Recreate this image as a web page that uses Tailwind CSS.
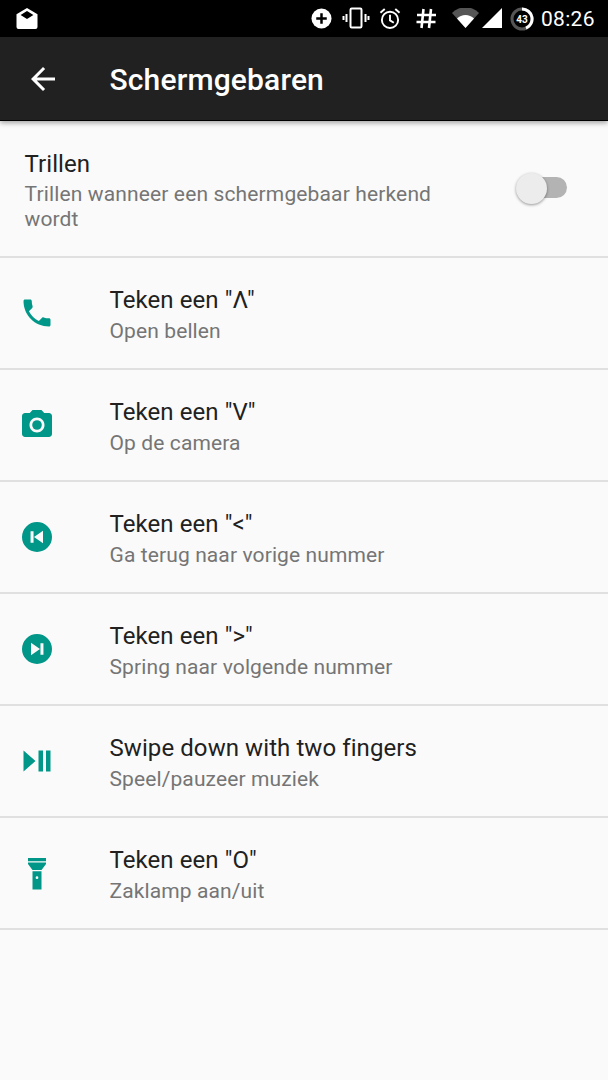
<!DOCTYPE html>
<html>
<head>
<script src="https://cdn.jsdelivr.net/npm/@tailwindcss/browser@4"></script>
</head>
<body class="m-0">
<div class="w-[608px] h-[1080px] bg-[#fafafa] overflow-hidden font-['Roboto',sans-serif] flex flex-col">
  <!-- status bar -->
  <div class="h-[37px] bg-black flex items-center justify-between text-white shrink-0">
    <svg class="ml-[15px] w-[24px] h-[24px]" viewBox="0 0 24 24" fill="#fff"><path d="M12 1 L22.5 7.2 V20 a2 2 0 0 1 -2 2 H3.5 a2 2 0 0 1 -2 -2 V7.2 Z M12 3.9 L5.6 7.9 L12 12 L18.4 7.9 Z" fill-rule="evenodd"/></svg>
    <div class="flex items-center h-full relative w-[300px]">
      <svg class="absolute left-[3px] top-[8px] w-[21px] h-[21px]" viewBox="0 0 22 22"><circle cx="11" cy="11" r="10.5" fill="#fff"/><path d="M5.5 9.7h4.2V5.5h2.6v4.2h4.2v2.6h-4.2v4.2H9.7v-4.2H5.5z" fill="#000"/></svg>
      <svg class="absolute left-[34px] top-[7px] w-[28px] h-[22px]" viewBox="0 0 28 22" fill="none" stroke="#fff"><rect x="8.5" y="1.5" width="11" height="19" rx="1.2" stroke-width="2"/><path d="M4.5 7v8M1.5 9v4M23.5 7v8M26.5 9v4" stroke-width="2"/></svg>
      <svg class="absolute left-[71px] top-[7px] w-[22px] h-[23px]" viewBox="0 0 23 24" fill="none" stroke="#fff" stroke-width="2"><circle cx="11.5" cy="13.5" r="8.5"/><path d="M11.5 8v6l4 2.5M1.5 6l4.5-4M21.5 6L17 2"/></svg>
      <svg class="absolute left-[108px] top-[8px] w-[21px] h-[21px]" viewBox="0 0 21 21" fill="none" stroke="#fff" stroke-width="2.6"><path d="M7.5 1L5.5 20M15 1L13 20M1 7h19M.5 14h19"/></svg>
      <svg class="absolute left-[144px] top-[8px] w-[27px] h-[20px]" viewBox="0 0 27 20"><path d="M0 5 A 19 19 0 0 1 27 5 L13.5 20 Z" fill="#555"/><path d="M5 10.5 A 12 12 0 0 1 22 10.5 L13.5 20 Z" fill="#fff"/></svg>
      <svg class="absolute left-[174px] top-[8px] w-[20px] h-[20px]" viewBox="0 0 21 21"><path d="M21 0V21H0Z" fill="#fff"/></svg>
      <svg class="absolute left-[202px] top-[7px] w-[24px] h-[24px]" viewBox="0 0 24 24" fill="none"><circle cx="12" cy="12" r="10" stroke="#555" stroke-width="3"/><path d="M12 2A10 10 0 0 1 16 21.2" stroke="#fff" stroke-width="3"/><text x="12" y="15.5" text-anchor="middle" font-size="10" font-weight="700" fill="#fff" font-family="Roboto">43</text></svg>
      <span class="absolute left-[233px] top-[5px] text-[21px] leading-[28px] tracking-[0.3px] text-white whitespace-nowrap">08:26</span>
    </div>
  </div>
  <!-- toolbar -->
  <div class="h-[84px] bg-[#212121] flex items-center shrink-0 border-b border-black shadow-[0_2px_5px_rgba(0,0,0,0.35)] relative">
    <svg class="ml-[24.5px] w-[36px] h-[36px]" viewBox="0 0 24 24" fill="#fff"><path d="M20 11H7.83l5.59-5.59L12 4l-8 8 8 8 1.41-1.41L7.83 13H20v-2z"/></svg>
    <span class="ml-[49px] pt-[2px] text-[30px] font-medium tracking-[0.15px] text-white leading-none">Schermgebaren</span>
  </div>
  <!-- Trillen -->
  <div class="h-[137px] shrink-0 border-b-2 border-[#e0e0e0] flex items-start pl-[24.5px] relative">
    <div class="pt-[29px] w-[430px]">
      <div class="text-[24px] leading-[28px] tracking-[0.08px] text-[#212121]">Trillen</div>
      <div class="text-[21px] leading-[25px] tracking-[0.14px] text-[#757575] mt-[4px]">Trillen wanneer een schermgebaar herkend wordt</div>
    </div>
    <div class="absolute left-[518px] top-[56px] w-[49px] h-[21px] rounded-full bg-[#b3b3b3]"></div>
    <div class="absolute left-[516px] top-[52px] w-[31px] h-[31px] rounded-full bg-[#ececec] shadow-[0_1px_3px_rgba(0,0,0,0.4)]"></div>
  </div>
  <!-- rows -->
  <div class="h-[112px] shrink-0 border-b-2 border-[#e0e0e0] flex items-center">
    <svg class="ml-[18.5px] w-[36px] h-[36px] text-[#009688]" viewBox="0 0 24 24" fill="currentColor"><path d="M6.62 10.79c1.44 2.83 3.76 5.14 6.59 6.59l2.2-2.2c.27-.27.67-.36 1.02-.24 1.12.37 2.33.57 3.57.57.55 0 1 .45 1 1V20c0 .55-.45 1-1 1-9.39 0-17-7.61-17-17 0-.55.45-1 1-1h3.5c.55 0 1 .45 1 1 0 1.25.2 2.45.57 3.57.11.35.03.74-.25 1.02l-2.2 2.2z"/></svg>
    <div class="ml-[55px] pt-[4px]">
      <div class="text-[24px] leading-[28px] tracking-[0.08px] text-[#212121]">Teken een "Λ"</div>
      <div class="text-[21px] leading-[25px] tracking-[0.11px] text-[#757575] mt-[5px]">Open bellen</div>
    </div>
  </div>
  <div class="h-[112px] shrink-0 border-b-2 border-[#e0e0e0] flex items-center">
    <svg class="ml-[18.5px] w-[36px] h-[36px] text-[#009688]" viewBox="0 0 24 24" fill="currentColor"><circle cx="12" cy="12" r="3.2"/><path d="M9 2L7.17 4H4c-1.1 0-2 .9-2 2v12c0 1.1.9 2 2 2h16c1.1 0 2-.9 2-2V6c0-1.1-.9-2-2-2h-3.17L15 2H9zm3 15c-2.76 0-5-2.24-5-5s2.24-5 5-5 5 2.24 5 5-2.24 5-5 5z"/></svg>
    <div class="ml-[55px] pt-[4px]">
      <div class="text-[24px] leading-[28px] tracking-[0.08px] text-[#212121]">Teken een "V"</div>
      <div class="text-[21px] leading-[25px] tracking-[0.11px] text-[#757575] mt-[5px]">Op de camera</div>
    </div>
  </div>
  <div class="h-[112px] shrink-0 border-b-2 border-[#e0e0e0] flex items-center">
    <svg class="ml-[18.5px] w-[36px] h-[36px] text-[#009688]" viewBox="0 0 24 24" fill="currentColor"><path fill-rule="evenodd" d="M12 2a10 10 0 1 0 0 20 10 10 0 0 0 0-20zM7.7 8.1h2v7.8h-2zM10 12l6-4.2v8.4z"/></svg>
    <div class="ml-[55px] pt-[4px]">
      <div class="text-[24px] leading-[28px] tracking-[0.08px] text-[#212121]">Teken een "&lt;"</div>
      <div class="text-[21px] leading-[25px] tracking-[0.11px] text-[#757575] mt-[5px]">Ga terug naar vorige nummer</div>
    </div>
  </div>
  <div class="h-[112px] shrink-0 border-b-2 border-[#e0e0e0] flex items-center">
    <svg class="ml-[18.5px] w-[36px] h-[36px] text-[#009688]" viewBox="0 0 24 24" fill="currentColor"><path fill-rule="evenodd" d="M12 2a10 10 0 1 0 0 20 10 10 0 0 0 0-20zM14.3 8.1h2v7.8h-2zM8 7.8l6 4.2-6 4.2z"/></svg>
    <div class="ml-[55px] pt-[4px]">
      <div class="text-[24px] leading-[28px] tracking-[0.08px] text-[#212121]">Teken een "&gt;"</div>
      <div class="text-[21px] leading-[25px] tracking-[0.11px] text-[#757575] mt-[5px]">Spring naar volgende nummer</div>
    </div>
  </div>
  <div class="h-[112px] shrink-0 border-b-2 border-[#e0e0e0] flex items-center">
    <svg class="ml-[18.5px] w-[36px] h-[36px] text-[#009688]" viewBox="0 0 24 24" fill="currentColor"><path d="M3 5v14l8-7zM13 5h3v14h-3zM18 5h3v14h-3z"/></svg>
    <div class="ml-[55px] pt-[4px]">
      <div class="text-[24px] leading-[28px] tracking-[0.08px] text-[#212121]">Swipe down with two fingers</div>
      <div class="text-[21px] leading-[25px] tracking-[0.11px] text-[#757575] mt-[5px]">Speel/pauzeer muziek</div>
    </div>
  </div>
  <div class="h-[112px] shrink-0 border-b-2 border-[#e0e0e0] flex items-center">
    <svg class="ml-[18.5px] w-[36px] h-[36px] text-[#009688]" viewBox="0 0 24 24" fill="currentColor"><path fill-rule="evenodd" d="M6 2h12v2.2H6zM6 5h12v1l-3 4H9L6 6zM9 10.8h6V23H9zM12 14.2a.9.9 0 1 0 0 1.8.9.9 0 0 0 0-1.8z"/></svg>
    <div class="ml-[55px] pt-[4px]">
      <div class="text-[24px] leading-[28px] tracking-[0.08px] text-[#212121]">Teken een "O"</div>
      <div class="text-[21px] leading-[25px] tracking-[0.11px] text-[#757575] mt-[5px]">Zaklamp aan/uit</div>
    </div>
  </div>
</div>
</body>
</html>
